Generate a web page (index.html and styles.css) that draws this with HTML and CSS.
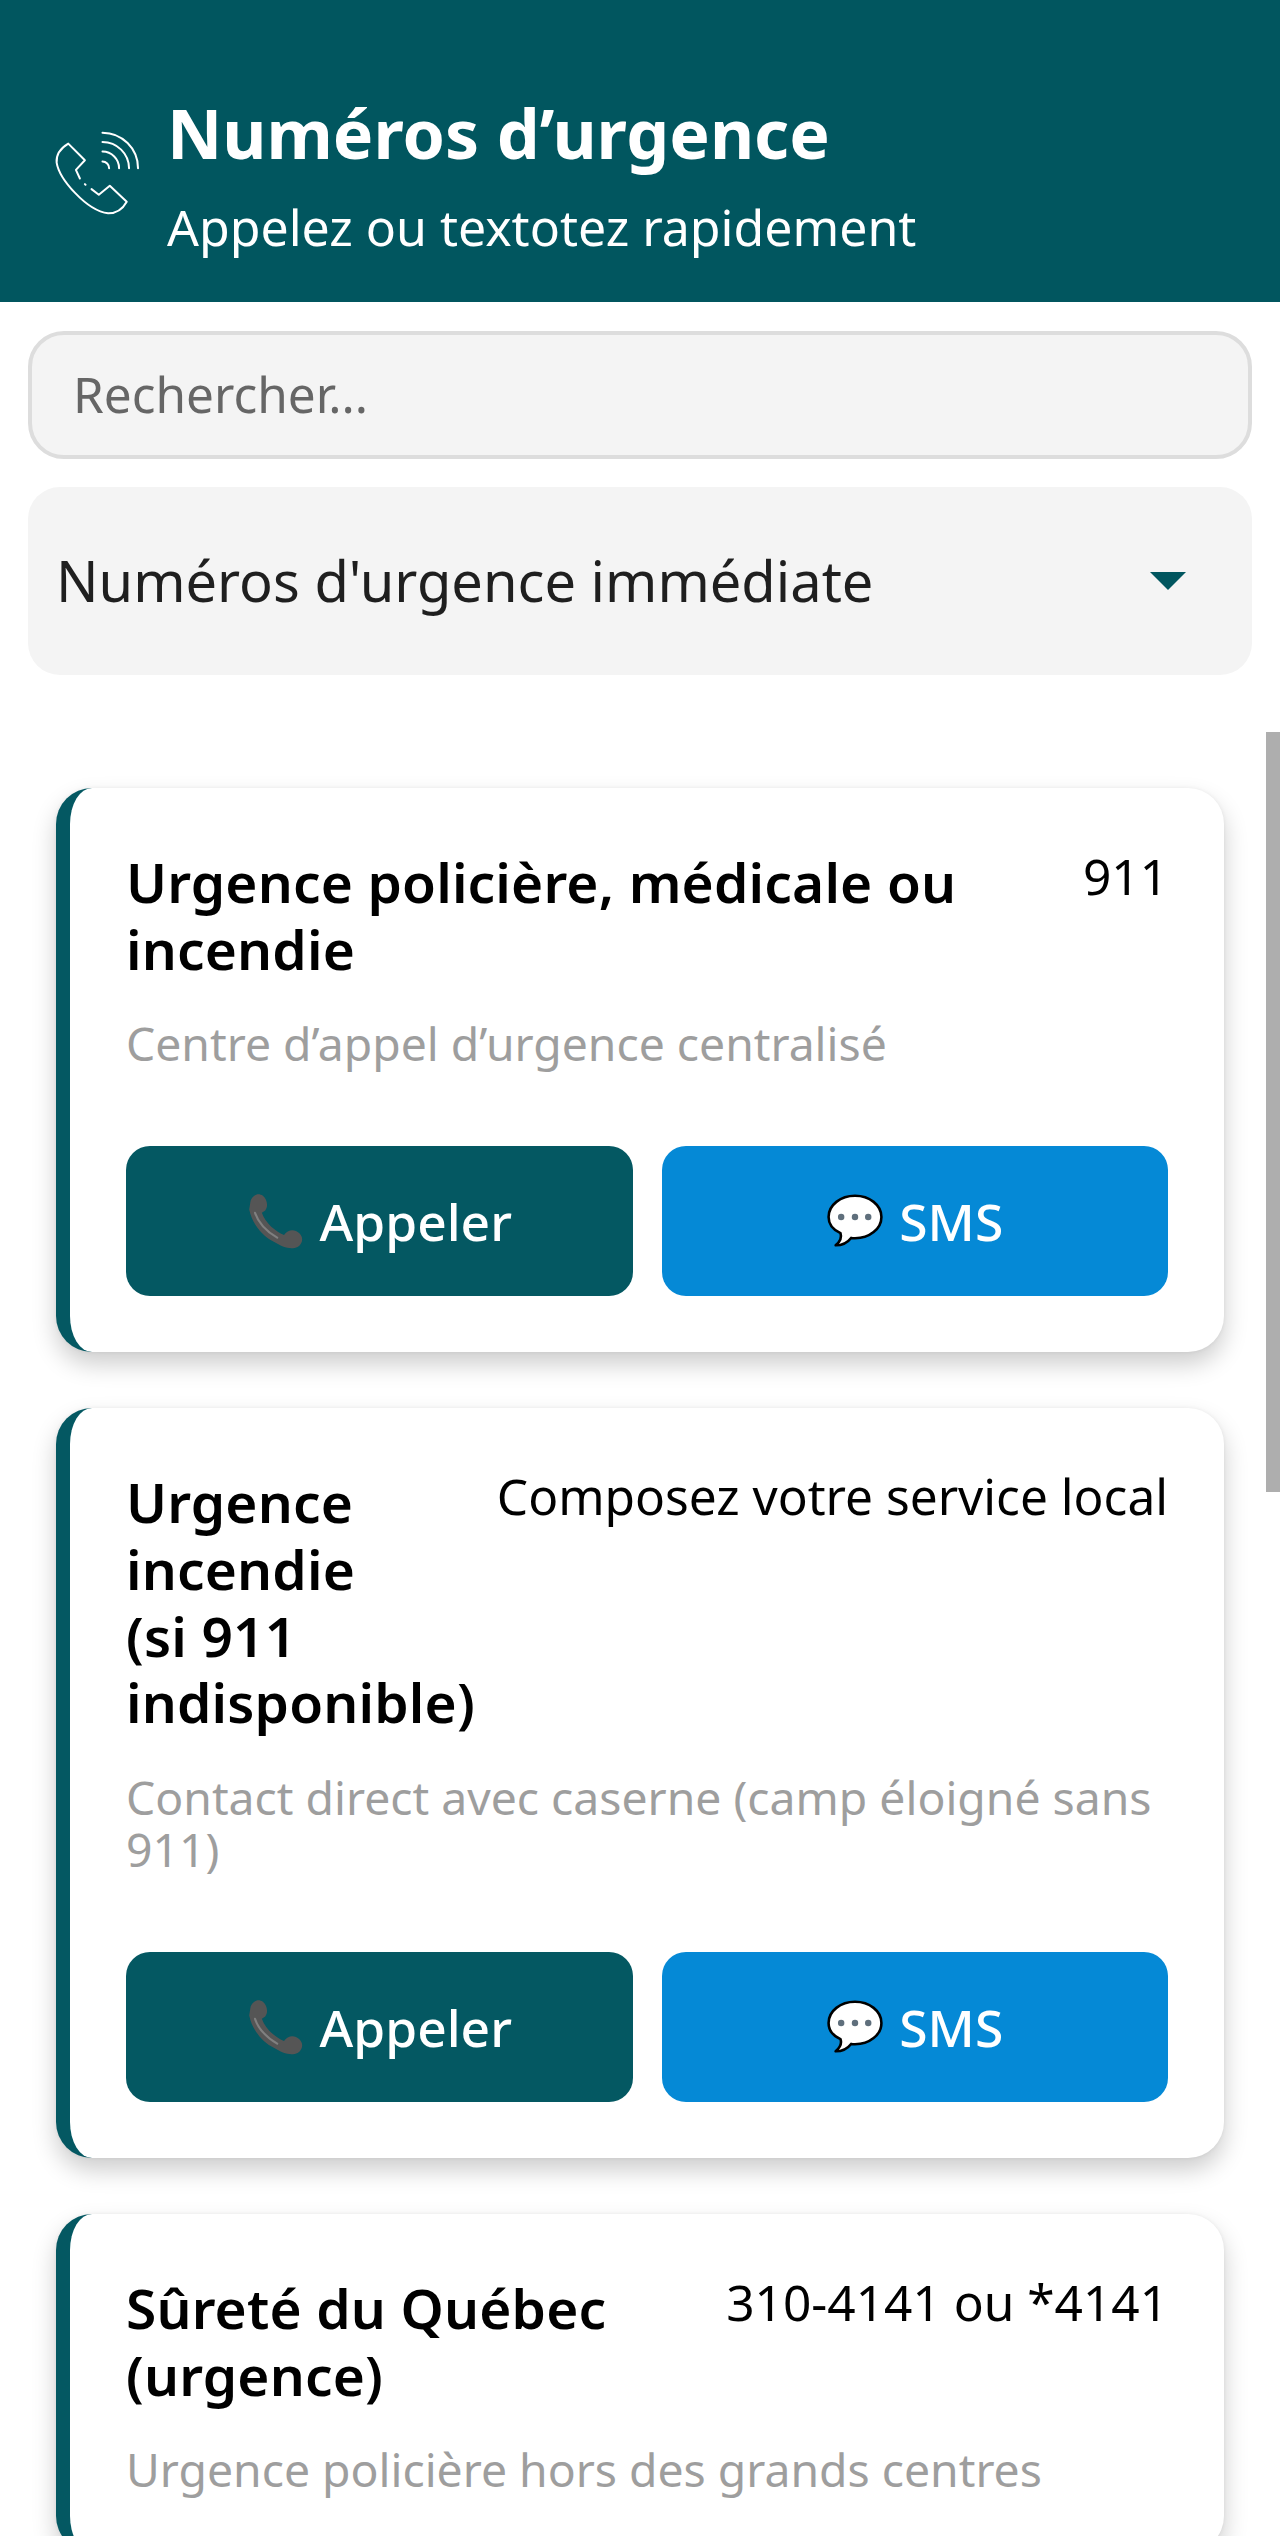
FILE: index.html
```html
<!DOCTYPE html>
<html lang="fr">
<head>
<meta charset="utf-8">
<title>Numéros d’urgence</title>
<link rel="stylesheet" href="styles.css">
</head>
<body>
<div class="screen">
  <header class="header">
    <svg class="header-icon" viewBox="60 80 280 280" fill="none" stroke="#fff" stroke-width="6" stroke-linecap="round" stroke-linejoin="round">
      <path d="M150 238 L138 212 L165 183 L115 133 C95 145 78 165 80 190 C88 240 170 335 235 343 C260 343 280 328 291 308 L240 260 L207 287 L185 270"/>
      <path d="M165 255 L167 257"/>
      <path d="M218 100 A107 107 0 0 1 325 207"/>
      <path d="M218 128 A80 80 0 0 1 298 207"/>
      <path d="M218 157 A50 50 0 0 1 268 207"/>
      <path d="M218 187 A20 20 0 0 1 238 207"/>
    </svg>
    <div class="header-text">
      <h1 class="header-title">Numéros d’urgence</h1>
      <p class="header-sub">Appelez ou textotez rapidement</p>
    </div>
  </header>
  <div class="search"><span class="search-text">Rechercher...</span></div>
  <div class="select">
    <span class="select-text">Numéros d'urgence immédiate</span>
    <span class="select-arrow"></span>
  </div>
  <main class="list">
    <article class="card">
      <div class="card-top">
        <h2 class="card-title">Urgence policière, médicale ou incendie</h2>
        <span class="card-number">911</span>
      </div>
      <p class="card-sub">Centre d’appel d’urgence centralisé</p>
      <div class="card-actions">
        <button class="btn btn-call">
          <svg class="emoji" viewBox="64 44 165 170"><path fill="#555" d="M72 70C78 52 95 45 108 55C120 65 125 85 115 98L105 105C115 135 145 160 170 170C180 155 200 150 215 165C228 178 225 195 210 205C190 215 165 205 140 190C100 170 75 130 68 95Z"/><path fill="none" stroke="#808080" stroke-width="6" stroke-linecap="round" d="M85 105C95 135 120 160 150 178"/></svg>
          Appeler
        </button>
        <button class="btn btn-sms">
          <svg class="emoji" viewBox="50 45 180 175"><path fill="#fff" stroke="#000" stroke-width="8" stroke-linejoin="round" d="M140 54C95 54 58 83 58 120C58 142 68 158 95 170C100 185 92 198 80 208C102 208 118 198 128 185C132 186 136 186 140 186C185 186 222 157 222 120C222 83 185 54 140 54Z"/><circle cx="97" cy="120" r="10" fill="#5f6f7c"/><circle cx="140" cy="120" r="10" fill="#5f6f7c"/><circle cx="181" cy="120" r="10" fill="#5f6f7c"/></svg>
          SMS
        </button>
      </div>
    </article>
    <article class="card">
      <div class="card-top">
        <h2 class="card-title">Urgence incendie<br>(si 911 indisponible)</h2>
        <span class="card-number">Composez votre service local</span>
      </div>
      <p class="card-sub">Contact direct avec caserne (camp éloigné sans 911)</p>
      <div class="card-actions">
        <button class="btn btn-call">
          <svg class="emoji" viewBox="64 44 165 170"><path fill="#555" d="M72 70C78 52 95 45 108 55C120 65 125 85 115 98L105 105C115 135 145 160 170 170C180 155 200 150 215 165C228 178 225 195 210 205C190 215 165 205 140 190C100 170 75 130 68 95Z"/><path fill="none" stroke="#808080" stroke-width="6" stroke-linecap="round" d="M85 105C95 135 120 160 150 178"/></svg>
          Appeler
        </button>
        <button class="btn btn-sms">
          <svg class="emoji" viewBox="50 45 180 175"><path fill="#fff" stroke="#000" stroke-width="8" stroke-linejoin="round" d="M140 54C95 54 58 83 58 120C58 142 68 158 95 170C100 185 92 198 80 208C102 208 118 198 128 185C132 186 136 186 140 186C185 186 222 157 222 120C222 83 185 54 140 54Z"/><circle cx="97" cy="120" r="10" fill="#5f6f7c"/><circle cx="140" cy="120" r="10" fill="#5f6f7c"/><circle cx="181" cy="120" r="10" fill="#5f6f7c"/></svg>
          SMS
        </button>
      </div>
    </article>
    <article class="card">
      <div class="card-top">
        <h2 class="card-title">Sûreté du Québec (urgence)</h2>
        <span class="card-number">310-4141 ou *4141</span>
      </div>
      <p class="card-sub">Urgence policière hors des grands centres</p>
    </article>
  </main>
  <div class="scrollbar"></div>
</div>
</body>
</html>
```
FILE: styles.css
```css
* { box-sizing: border-box; }
html, body { margin: 0; padding: 0; height: 2536px; overflow: hidden; background: #fff; }
body { font-family: "Noto Sans", "Open Sans", sans-serif; color: #000; }
.screen { position: relative; width: 1280px; height: 2536px; overflow: hidden; background: #fff; }
.header { height: 302px; background: #01565f; display: flex; align-items: flex-start; padding: 91px 0 0 50px; gap: 24px; color: #fff; }
.header-icon { width: 93px; height: 93px; flex: none; margin-top: 35px; }
.header-text { display: flex; flex-direction: column; }
.header-title { margin: 0; font-size: 68px; line-height: 84px; font-weight: 700; }
.header-sub { margin: 22px 0 0; font-size: 50px; line-height: 60px; font-weight: 400; }
.search { margin: 29px 28px 0; height: 128px; background: #f4f4f4; border: 4px solid #ddd; border-radius: 36px; display: flex; align-items: center; padding: 0 41px; }
.search-text { font-size: 49.5px; color: #666; margin-top: -2px; }
.select { margin: 28px 28px 0; height: 188px; background: #f4f4f4; border-radius: 32px; display: flex; align-items: center; justify-content: space-between; padding: 0 66px 0 28px; }
.select-text { font-size: 56px; color: #1f1f1f; margin-top: -2px; }
.select-arrow { width: 0; height: 0; border-left: 18px solid transparent; border-right: 18px solid transparent; border-top: 18px solid #01565f; }
.list { padding: 113px 56px 0; display: flex; flex-direction: column; gap: 56px; }
.card { background: #fff; border-left: 14px solid #045862; border-radius: 36px; padding: 56px; box-shadow: 0 12px 24px rgba(0,0,0,.2), 0 0 4px rgba(0,0,0,.06); }
.card-top { display: flex; justify-content: space-between; align-items: flex-start; gap: 14px; }
.card-title { margin: 5px 0 0; font-size: 55px; line-height: 66.67px; font-weight: 600; letter-spacing: .16px; }
.card-number { flex: none; white-space: nowrap; font-size: 49.6px; line-height: 66px; margin-top: -1px; }
.card-sub { margin: 36px 0 0; font-size: 46.3px; line-height: 52px; color: #9e9e9e; }
.card-actions { margin-top: 76px; display: grid; grid-template-columns: 1fr 1fr; gap: 29px; }
.btn { height: 150px; border: 0; border-radius: 24px; color: #fff; font-family: inherit; font-size: 51.5px; font-weight: 500; display: flex; align-items: center; justify-content: center; gap: 15px; padding: 0; }
.btn-call { background: #045862; }
.btn-sms { background: #0589d6; }
.emoji { width: 58px; height: 58px; flex: none; }
.scrollbar { position: absolute; right: 0; top: 732px; width: 14px; height: 760px; background: #aeaeae; }
```
